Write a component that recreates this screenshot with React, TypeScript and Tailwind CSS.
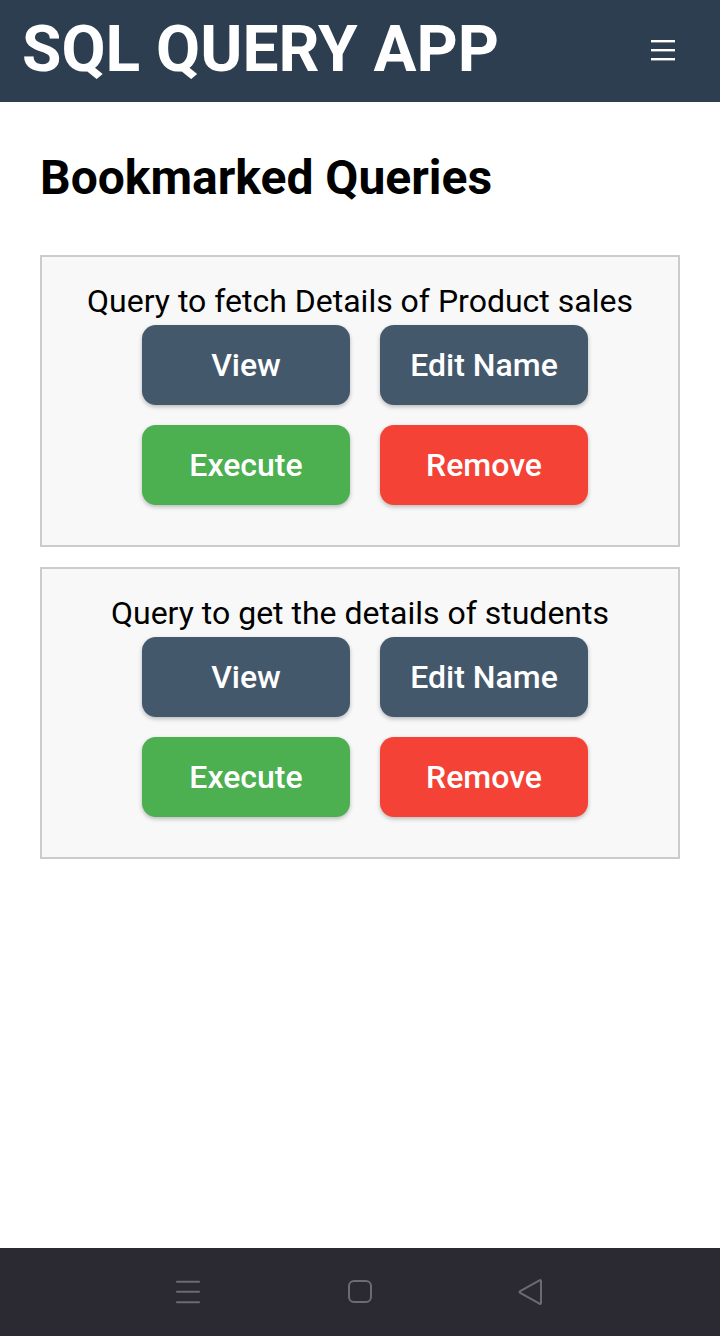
const queries = [
  'Query to fetch Details of Product sales',
  'Query to get the details of students',
]

function QueryCard({ title }: { title: string }) {
  return (
    <div className="border-2 border-[#cccccc] bg-[#f8f8f8] pt-[26px] pb-[40px] flex flex-col items-center">
      <p className="text-[32px] leading-[37px] text-black">{title}</p>
      <div className="mt-[5px] ml-[10px] grid grid-cols-[208px_208px] gap-x-[30px] gap-y-[20px]">
        <button className="h-[80px] rounded-[14px] bg-[#44586c] text-white text-[32px] font-medium shadow-[0_2px_4px_rgba(0,0,0,0.25)]">
          View
        </button>
        <button className="h-[80px] rounded-[14px] bg-[#44586c] text-white text-[32px] font-medium shadow-[0_2px_4px_rgba(0,0,0,0.25)]">
          Edit Name
        </button>
        <button className="h-[80px] rounded-[14px] bg-[#4caf50] text-white text-[32px] font-medium shadow-[0_2px_4px_rgba(0,0,0,0.25)]">
          Execute
        </button>
        <button className="h-[80px] rounded-[14px] bg-[#f44336] text-white text-[32px] font-medium shadow-[0_2px_4px_rgba(0,0,0,0.25)]">
          Remove
        </button>
      </div>
    </div>
  )
}

export default function App() {
  return (
    <div className="w-[720px] h-[1336px] flex flex-col bg-white font-['Roboto',sans-serif]">
      {/* Header */}
      <div className="h-[102px] shrink-0 bg-[#2c3e50] flex items-center justify-between pl-[22px] pr-[44px]">
        <h1 className="text-[64px] leading-[75px] font-bold text-white -mt-[4px]">SQL QUERY APP</h1>
        <svg width="26" height="26" viewBox="0 0 26 26" className="-mt-[2px]">
          <rect x="1" y="3" width="24" height="2.4" fill="#ffffff" />
          <rect x="1" y="12" width="24" height="2.4" fill="#ffffff" />
          <rect x="1" y="21" width="24" height="2.4" fill="#ffffff" />
        </svg>
      </div>

      {/* Content */}
      <div className="flex-1 px-[40px] pt-[48px]">
        <h2 className="text-[48px] leading-[56px] font-bold text-black">Bookmarked Queries</h2>
        <div className="mt-[49px] flex flex-col gap-[20px]">
          {queries.map((q, i) => (
            <QueryCard key={i} title={q} />
          ))}
        </div>
      </div>

      {/* Android nav bar */}
      <div className="h-[88px] shrink-0 bg-[#2b2a33] flex items-center pl-[176px]">
        <svg width="24" height="24" viewBox="0 0 24 24">
          <rect x="0" y="0.8" width="24" height="2" rx="1" fill="#6c6b72" />
          <rect x="0" y="10.8" width="24" height="2" rx="1" fill="#6c6b72" />
          <rect x="0" y="21.3" width="24" height="2" rx="1" fill="#6c6b72" />
        </svg>
        <svg width="26" height="26" viewBox="0 0 26 26" className="ml-[147px]">
          <rect x="2" y="2" width="22" height="21" rx="5" fill="none" stroke="#6c6b72" strokeWidth="2" />
        </svg>
        <svg width="26" height="28" viewBox="0 0 26 28" className="ml-[144px]">
          <path d="M24 3.2 L24 24.8 Q24 26.6 22.5 25.6 L3.2 14.9 Q2 14 3.2 13.1 L22.5 2.4 Q24 1.4 24 3.2 Z" fill="none" stroke="#6c6b72" strokeWidth="2" strokeLinejoin="round" />
        </svg>
      </div>
    </div>
  )
}
